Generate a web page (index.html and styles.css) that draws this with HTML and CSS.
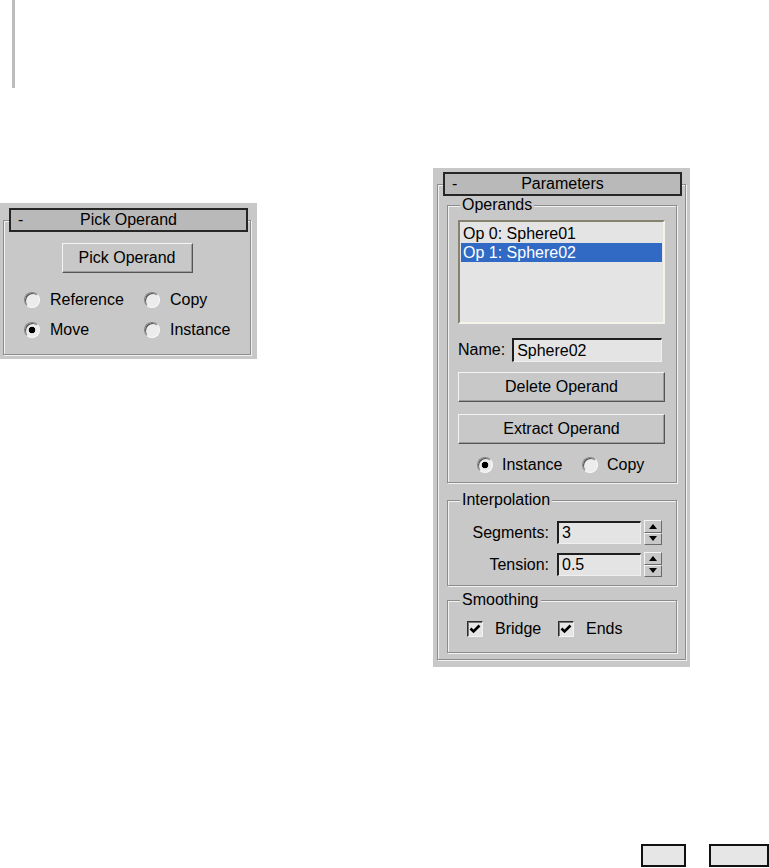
FILE: index.html
```html
<!DOCTYPE html>
<html lang="en">
<head>
    <meta charset="UTF-8">
    <meta name="viewport" content="width=device-width, initial-scale=1.0">
    <title>Boolean Rollouts</title>
    <link rel="stylesheet" href="styles.css">
</head>
<body>
<div class="page">
    <div class="margin-rule"></div>

    <div class="figures">
        <!-- Pick Operand rollout -->
        <div class="rollout rollout-pick">
            <div class="frame">
                <div class="rollout-title">
                    <span class="rollout-toggle">-</span>
                    <span class="rollout-name">Pick Operand</span>
                </div>
                <button type="button" class="max-button pick-button">Pick Operand</button>
                <div class="radio-grid">
                    <div class="option"><span class="radio"></span>Reference</div>
                    <div class="option"><span class="radio"></span>Copy</div>
                    <div class="option"><span class="radio checked"></span>Move</div>
                    <div class="option"><span class="radio"></span>Instance</div>
                </div>
            </div>
        </div>

        <!-- Parameters rollout -->
        <div class="rollout rollout-params">
            <div class="frame">
                <div class="rollout-title">
                    <span class="rollout-toggle">-</span>
                    <span class="rollout-name">Parameters</span>
                </div>

                <div class="group group-operands">
                    <div class="group-label">Operands</div>
                    <div class="listbox">
                        <div class="list-row">Op 0: Sphere01</div>
                        <div class="list-row selected">Op 1: Sphere02</div>
                    </div>
                    <div class="name-row">
                        <span>Name:</span>
                        <input type="text" class="max-input name-input" value="Sphere02">
                    </div>
                    <button type="button" class="max-button wide-button delete-button">Delete Operand</button>
                    <button type="button" class="max-button wide-button extract-button">Extract Operand</button>
                    <div class="radio-row">
                        <div class="option option-first"><span class="radio checked"></span>Instance</div>
                        <div class="option"><span class="radio"></span>Copy</div>
                    </div>
                </div>

                <div class="group group-interp">
                    <div class="group-label">Interpolation</div>
                    <div class="spin-row first">
                        <span class="spin-label">Segments:</span>
                        <input type="text" class="max-input spin-input" value="3">
                        <div class="spinner">
                            <span class="spin-half"><svg width="8" height="5" viewBox="0 0 8 5"><path d="M0 5 L4 0 L8 5 Z" fill="#000"/></svg></span>
                            <span class="spin-half"><svg width="8" height="5" viewBox="0 0 8 5"><path d="M0 0 L8 0 L4 5 Z" fill="#000"/></svg></span>
                        </div>
                    </div>
                    <div class="spin-row">
                        <span class="spin-label">Tension:</span>
                        <input type="text" class="max-input spin-input" value="0.5">
                        <div class="spinner">
                            <span class="spin-half"><svg width="8" height="5" viewBox="0 0 8 5"><path d="M0 5 L4 0 L8 5 Z" fill="#000"/></svg></span>
                            <span class="spin-half"><svg width="8" height="5" viewBox="0 0 8 5"><path d="M0 0 L8 0 L4 5 Z" fill="#000"/></svg></span>
                        </div>
                    </div>
                </div>

                <div class="group group-smooth">
                    <div class="group-label">Smoothing</div>
                    <div class="check-row">
                        <div class="option option-check first"><span class="checkbox"><svg width="12" height="12" viewBox="0 0 12 12"><path d="M1.5 5.5 L4.5 8.5 L10.5 2.5" fill="none" stroke="#000" stroke-width="2.6"/></svg></span>Bridge</div>
                        <div class="option option-check"><span class="checkbox"><svg width="12" height="12" viewBox="0 0 12 12"><path d="M1.5 5.5 L4.5 8.5 L10.5 2.5" fill="none" stroke="#000" stroke-width="2.6"/></svg></span>Ends</div>
                    </div>
                </div>
            </div>
        </div>
    </div>

    <div class="footer">
        <div class="footer-box small"></div>
        <div class="footer-box wide"></div>
    </div>
</div>
</body>
</html>
```

FILE: styles.css
```css
* {
    box-sizing: border-box;
}

body {
    margin: 0;
    padding: 0;
    background-color: #fff;
    font-family: "Liberation Sans", Arial, sans-serif;
    font-size: 16px;
    color: #000;
}

.page {
    width: 769px;
    height: 868px;
    overflow: hidden;
}

.margin-rule {
    margin-left: 12px;
    width: 3px;
    height: 88px;
    background-color: #bdbdbd;
}

.figures {
    display: flex;
    align-items: flex-start;
}

/* rollout panels */
.rollout {
    width: 257px;
    background-color: #c8c8c8;
}

.rollout-pick {
    margin-top: 115px;
    padding: 17px 6px 4px 3px;
}

.rollout-params {
    margin-top: 80px;
    margin-left: 176px;
    padding: 16px 4px 7px 4px;
}

.frame {
    border: 1px solid #8c8c8c;
    box-shadow: inset 1px 1px 0 #f2f2f2, 1px 1px 0 #f2f2f2;
}

.rollout-pick .frame {
    padding-bottom: 9px;
}

.rollout-params .frame {
    padding-bottom: 6px;
}

.rollout-title {
    display: grid;
    grid-template-columns: 1fr auto 1fr;
    align-items: center;
    height: 24px;
    margin: -13px 2px 0 5px;
    border: 2px solid #262626;
    background-color: #b9b9b9;
    line-height: 20px;
}

.rollout-params .rollout-title {
    margin-right: 3px;
}

.rollout-toggle {
    padding-left: 7px;
}

/* buttons */
.max-button {
    display: block;
    height: 30px;
    padding: 0;
    font-family: inherit;
    font-size: 16px;
    color: #000;
    background-color: #c8c8c8;
    border: 1px solid;
    border-color: #f4f4f4 #555 #555 #f4f4f4;
    box-shadow: inset -1px -1px 0 #9c9c9c;
}

.pick-button {
    width: 131px;
    margin: 11px auto 0;
}

.wide-button {
    width: 207px;
}

.delete-button {
    margin-top: 10px;
}

.extract-button {
    margin-top: 12px;
}

/* radios and checks */
.option {
    display: flex;
    align-items: center;
    gap: 10px;
}

.radio {
    flex: none;
    width: 16px;
    height: 16px;
    border-radius: 50%;
    border: 1px solid;
    border-color: #858585 #fafafa #fafafa #858585;
    box-shadow: inset 1px 1px 0 #505050;
    background: #ececec;
}

.radio.checked {
    background: radial-gradient(circle, #000 0 3px, #ececec 3.6px);
}

.radio-grid {
    display: grid;
    grid-template-columns: 120px 1fr;
    grid-auto-rows: 30px;
    margin-top: 12px;
    padding-left: 20px;
}

.radio-row {
    display: flex;
    align-items: center;
    height: 26px;
    margin-top: 8px;
    margin-left: 19px;
}

.radio-row .option {
    gap: 9px;
}

.radio-row .option-first {
    width: 105px;
}

.checkbox {
    flex: none;
    display: flex;
    align-items: center;
    justify-content: center;
    width: 16px;
    height: 16px;
    border: 1px solid;
    border-color: #2c2c2c #f2f2f2 #f2f2f2 #2c2c2c;
    box-shadow: inset 1px 1px 0 #777;
    background-color: #e6e6e6;
}

/* group boxes */
.group {
    margin: 0 8px 0 9px;
    padding: 0 11px 0 10px;
    border: 1px solid #8c8c8c;
    box-shadow: inset 1px 1px 0 #f2f2f2, 1px 1px 0 #f2f2f2;
}

.group-label {
    width: fit-content;
    margin: -10px 0 0 2px;
    padding: 0 2px;
    line-height: 18px;
    background-color: #c8c8c8;
}

.group-operands {
    margin-top: 9px;
    padding-bottom: 4px;
}

.group-interp {
    margin-top: 17px;
    padding-bottom: 8px;
}

.group-smooth {
    margin-top: 14px;
    padding-bottom: 14px;
}

.listbox {
    height: 104px;
    margin-top: 6px;
    padding: 2px 1px;
    border: 2px solid;
    border-color: #86826f #f6f4ea #f6f4ea #86826f;
    background-color: #e4e4e4;
}

.list-row {
    height: 19px;
    padding-left: 2px;
    line-height: 19px;
}

.list-row.selected {
    background-color: #316ac5;
    color: #fff;
}

.max-input {
    font-family: inherit;
    font-size: 16px;
    color: #000;
    padding: 0 3px;
    border: 1px solid;
    border-top: 2px solid #1e1e1e;
    border-left: 2px solid #1e1e1e;
    border-right-color: #f0f0f0;
    border-bottom-color: #f0f0f0;
    background-color: #e4e4e4;
    outline: none;
}

.name-row {
    display: flex;
    align-items: center;
    gap: 7px;
    margin-top: 14px;
}

.name-input {
    width: 150px;
    height: 24px;
}

.spin-row {
    display: flex;
    align-items: center;
    height: 25px;
    margin-top: 7px;
}

.spin-row.first {
    margin-top: 11px;
}

.spin-label {
    width: 91px;
    text-align: right;
}

.spin-input {
    width: 84px;
    height: 23px;
    margin-left: 8px;
}

.spinner {
    display: flex;
    flex-direction: column;
    width: 18px;
    height: 25px;
    margin-left: 3px;
}

.spin-half {
    flex: 1;
    display: flex;
    align-items: center;
    justify-content: center;
    background-color: #c8c8c8;
    border: 1px solid;
    border-color: #f4f4f4 #6a6a6a #6a6a6a #f4f4f4;
}

.check-row {
    display: flex;
    align-items: center;
    height: 18px;
    margin-top: 11px;
    margin-left: 9px;
}

.option-check {
    gap: 12px;
}

.option-check.first {
    width: 91px;
}

/* footer boxes */
.footer {
    display: flex;
    justify-content: flex-end;
    gap: 23px;
    margin-top: 177px;
}

.footer-box {
    height: 23px;
    border: 2px solid #111;
    background-color: #e6e6e6;
}

.footer-box.small {
    width: 45px;
}

.footer-box.wide {
    width: 60px;
}
```
